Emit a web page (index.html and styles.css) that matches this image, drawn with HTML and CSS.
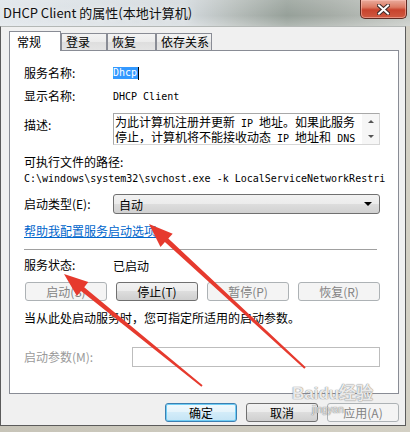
FILE: index.html
```html
<!DOCTYPE html>
<html lang="zh-CN">
<head>
    <meta charset="UTF-8">
    <title>DHCP Client 的属性(本地计算机)</title>
    <link rel="stylesheet" href="styles.css">
</head>
<body>

    <div class="window">
        <div class="titlebar">
            <span class="title">DHCP Client 的属性(本地计算机)</span>
            <div class="close">
                <svg width="13" height="11" viewBox="0 0 13 11">
                    <path d="M2 1.5 L11 9.5 M11 1.5 L2 9.5" stroke="#3d2a28" stroke-width="4" stroke-linecap="square"/>
                    <path d="M2 1.5 L11 9.5 M11 1.5 L2 9.5" stroke="#fff" stroke-width="2" stroke-linecap="square"/>
                </svg>
            </div>
        </div>

        <div class="client">
            <div class="tabs">
                <div class="tab active">常规</div>
                <div class="tab w46">登录</div>
                <div class="tab w49">恢复</div>
                <div class="tab w56">依存关系</div>
            </div>

            <div class="panel">
                <div class="row first">
                    <span class="label">服务名称:</span>
                    <span class="en"><span class="sel">Dhcp</span><span class="caret"></span></span>
                </div>
                <div class="row">
                    <span class="label">显示名称:</span>
                    <span class="en">DHCP Client</span>
                </div>
                <div class="row top gap8">
                    <span class="label desc-label">描述:</span>
                    <div class="desc-box">
                        <div class="desc-text">为此计算机注册并更新<span class="en"> IP </span>地址。如果此服务<br>停止，计算机将不能接收动态<span class="en"> IP </span>地址和<span class="en"> DNS</span></div>
                        <div class="scroll">
                            <span class="up"></span>
                            <span class="down"></span>
                        </div>
                    </div>
                </div>
                <div class="line gap8">可执行文件的路径:</div>
                <div class="path en">C:\windows\system32\svchost.exe -k LocalServiceNetworkRestri</div>
                <div class="row select-row">
                    <span class="label">启动类型(E):</span>
                    <div class="select">
                        <span>自动</span>
                        <span class="drop"></span>
                    </div>
                </div>
                <div class="line gap8"><a class="link" href="#">帮助我配置服务启动选项。</a></div>
                <div class="sep"></div>
                <div class="row status-row">
                    <span class="label">服务状态:</span>
                    <span>已启动</span>
                </div>
                <div class="svc-buttons">
                    <button class="btn" disabled>启动(S)</button>
                    <button class="btn">停止(T)</button>
                    <button class="btn" disabled>暂停(P)</button>
                    <button class="btn" disabled>恢复(R)</button>
                </div>
                <div class="line gap8">当从此处启动服务时，您可指定所适用的启动参数。</div>
                <div class="row params-row">
                    <span class="label wide disabled">启动参数(M):</span>
                    <div class="input"></div>
                </div>
            </div>

            <div class="actions">
                <button class="btn default">确定</button>
                <button class="btn">取消</button>
                <button class="btn" disabled>应用(A)</button>
            </div>
        </div>

        <!-- annotation arrows drawn over the dialog -->
        <svg class="marks" width="410" height="432" viewBox="0 0 410 432">
            <polygon fill="#e63a2e" points="149,224 172.7,233.7 168.3,238.5 305.7,367.3 304.3,368.7 164.9,242.1 160.5,246.9"/>
            <polygon fill="#e63a2e" points="64,274 88.3,282.1 84.2,287.2 202.6,385.2 201.4,386.8 81,291 76.9,296.1"/>
        </svg>

        <div class="watermark">
            <div class="wm-main">Bai<span class="wm-du">du</span>经验</div>
            <div class="wm-sub">jingyan</div>
        </div>
    </div>

</body>
</html>
```

FILE: styles.css
```css
body {
    margin: 0;
    font-family: "Noto Sans CJK SC", sans-serif;
    font-size: 12px;
    color: #000;
}

.window {
    position: relative;
    width: 410px;
    height: 432px;
    overflow: hidden;
    background: linear-gradient(90deg, #c7c4b8, #d3d0c4);
}

.titlebar {
    height: 26px;
    display: flex;
    justify-content: space-between;
    align-items: flex-start;
    padding: 0 3px 0 3px;
    background:
        linear-gradient(rgba(255, 255, 255, 0.15), rgba(255, 255, 255, 0) 60%, rgba(255, 255, 255, 0.25)),
        linear-gradient(90deg, #dfe5ea 0%, #d3d9dd 45%, #b4bbb8 58%, #96a099 70%, #a4aba5 80%, #c4c8c3 100%);
}

.title {
    line-height: 26px;
    font-size: 13px;
    color: #101010;
    text-shadow: 0 0 6px rgba(255, 255, 255, 0.9);
}

.close {
    width: 47px;
    height: 19px;
    box-sizing: border-box;
    border: 1px solid #5e2a22;
    border-top: none;
    border-radius: 0 0 5px 5px;
    background: linear-gradient(#e9ab9c 0%, #dc7a63 40%, #c8432d 55%, #cf5a41 100%);
    box-shadow: inset 0 0 0 1px rgba(255, 200, 190, 0.5);
    display: flex;
    align-items: center;
    justify-content: center;
}

.client {
    width: 406px;
    height: 400px;
    box-sizing: border-box;
    background: #f0f0f0;
    border: 1px solid #5b5b5b;
    border-top-color: #b4b8b6;
    padding: 4px 6px 0 8px;
}

/* tab strip */

.tabs {
    display: flex;
    align-items: flex-end;
    height: 19px;
}

.tab {
    box-sizing: border-box;
    height: 17px;
    border: 1px solid #898c95;
    border-bottom: none;
    background: linear-gradient(#f3f3f3, #ebebeb 50%, #dedede 50%, #e4e4e4);
    padding: 0 0 0 4px;
    line-height: 16px;
    font-size: 12px;
}

.tab.active {
    position: relative;
    z-index: 1;
    width: 52px;
    height: 20px;
    margin-bottom: -1px;
    background: #fff;
    padding-left: 7px;
    line-height: 19px;
}

.w46 { width: 46px; }
.w49 { width: 49px; }
.w56 { width: 56px; }

.panel {
    box-sizing: border-box;
    height: 344px;
    border: 1px solid #898c95;
    background: #fff;
    padding: 0 18px 0 14px;
}

/* general rows */

.row {
    display: flex;
    align-items: center;
    height: 18px;
    margin-top: 5px;
}

.row.first { margin-top: 13px; }

.row.top {
    align-items: flex-start;
    height: 32px;
}

.gap8 { margin-top: 8px; }

.label {
    width: 89px;
    flex: none;
    line-height: 18px;
}

.label.wide { width: 108px; }

.disabled { color: #9a9a9a; }

.line {
    line-height: 18px;
    white-space: nowrap;
}

.en {
    font-family: "DejaVu Sans Mono", monospace;
    font-size: 10px;
}

.sel {
    display: inline-block;
    height: 12px;
    line-height: 12px;
    background: #3399ff;
    color: #fff;
    padding: 0 1px 0 0;
    vertical-align: middle;
}

.caret {
    display: inline-block;
    width: 1px;
    height: 13px;
    background: #000;
    vertical-align: middle;
}

/* description box */

.desc-label { margin-top: 3px; }

.desc-box {
    flex: 1;
    height: 32px;
    box-sizing: border-box;
    display: flex;
    border: 1px solid #a8a8a8;
    border-right-color: #d6d6d6;
    border-bottom-color: #d6d6d6;
}

.desc-text {
    flex: 1;
    padding: 1px 0 0 1px;
    line-height: 13px;
    white-space: nowrap;
    overflow: hidden;
}

.scroll {
    width: 17px;
    display: flex;
    flex-direction: column;
    background: #f6f6f6;
}

.scroll span {
    flex: 1;
    display: flex;
    align-items: center;
    justify-content: center;
}

.scroll .up::before,
.scroll .down::before {
    content: "";
    border-left: 3px solid transparent;
    border-right: 3px solid transparent;
}

.scroll .up::before { border-bottom: 3px solid #555; }
.scroll .down::before { border-top: 3px solid #555; }

.path {
    line-height: 16px;
    white-space: nowrap;
    margin-right: -10px;
}

/* startup type */

.select-row {
    height: 20px;
    margin-top: 7px;
}

.select {
    flex: 1;
    height: 20px;
    box-sizing: border-box;
    border: 1px solid #707070;
    border-radius: 3px;
    background: linear-gradient(#f2f2f2, #ebebeb 50%, #dddddd 50%, #d1d1d1);
    display: flex;
    align-items: center;
    justify-content: space-between;
    padding: 0 7px 0 5px;
}

.drop {
    border-left: 4px solid transparent;
    border-right: 4px solid transparent;
    border-top: 4px solid #000;
}

.link {
    color: #0066cc;
}

.sep {
    height: 1px;
    margin: 9px 3px 0 0;
    background: #a0a0a0;
}

.status-row { margin-top: 6px; }

/* buttons */

.svc-buttons {
    display: flex;
    gap: 9px;
    margin: 8px 0 0 1px;
}

.btn {
    box-sizing: border-box;
    width: 82px;
    height: 19px;
    padding: 0;
    border: 1px solid #707070;
    border-radius: 3px;
    background: linear-gradient(#f2f2f2, #ebebeb 50%, #dddddd 50%, #cfcfcf);
    font-family: "Noto Sans CJK SC", sans-serif;
    font-size: 12px;
    line-height: 17px;
    color: #000;
}

.btn:disabled {
    border-color: #adb2b5;
    background: #f4f4f4;
    color: #838383;
}

.btn.default {
    border-color: #3c7fb1;
    box-shadow: inset 0 0 0 1px #6fcdf5;
    background: linear-gradient(#f1f9fd, #e4f3fb 50%, #d3ecf9 50%, #c4e4f5);
}

.params-row {
    height: 20px;
    margin-top: 20px;
}

.input {
    flex: 1;
    height: 20px;
    box-sizing: border-box;
    border: 1px solid #bdbdbd;
    background: #fff;
}

.actions {
    display: flex;
    justify-content: flex-end;
    gap: 9px;
    margin-top: 9px;
}

.actions .btn { width: 72px; }

/* overlays */

.marks {
    position: absolute;
    left: 0;
    top: 0;
    pointer-events: none;
}

.watermark {
    position: absolute;
    left: 292px;
    top: 384px;
    pointer-events: none;
    color: rgba(255, 255, 255, 0.85);
    text-shadow: 0 0 1px rgba(110, 110, 110, 0.8), 0 0 1px rgba(110, 110, 110, 0.8);
}

.wm-main {
    font-family: "Liberation Sans", sans-serif;
    font-size: 17px;
    font-weight: bold;
    line-height: 20px;
}

.wm-du { font-size: 17px; }

.wm-sub {
    font-family: "Liberation Sans", sans-serif;
    font-size: 10px;
    line-height: 11px;
    margin-left: 20px;
    color: rgba(240, 240, 240, 0.9);
}
```
